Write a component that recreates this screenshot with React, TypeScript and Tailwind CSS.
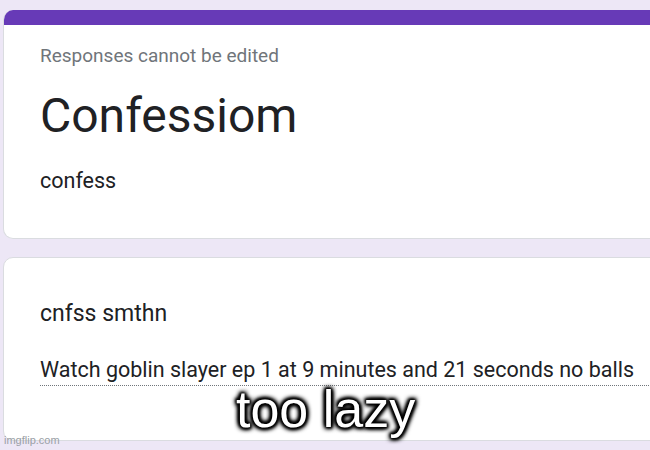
export default function App() {
  return (
    <div className="relative w-[650px] h-[450px] overflow-hidden bg-[#ede7f6]" style={{ fontFamily: "Roboto, 'Noto Sans', sans-serif" }}>
      <div className="pt-[10px] pl-[3px] flex flex-col gap-[18px]">
        <div className="w-[700px] rounded-[10px] overflow-hidden bg-white border border-[#dadce0] border-t-0">
          <div className="h-[15px] bg-[#673ab7]" />
          <div className="pl-[36px] pt-[19px] h-[213px]">
            <div className="text-[19px] leading-[24px] text-[#70757a]">Responses cannot be edited</div>
            <div className="mt-[18px] text-[48px] leading-[60px] text-[#202124]">Confessiom</div>
            <div className="mt-[21px] text-[21.5px] leading-[28px] text-[#202124]">confess</div>
          </div>
        </div>
        <div className="w-[700px] h-[184px] rounded-[10px] bg-white border border-[#dadce0] pl-[36px] pt-[42px]">
          <div className="text-[23px] leading-[28px] text-[#202124]">cnfss smthn</div>
          <div className="mt-[27px] w-[611px] text-[21.5px] leading-[30px] text-[#202124] border-b border-dotted border-[#70757a] whitespace-nowrap">
            Watch goblin slayer ep 1 at 9 minutes and 21 seconds no balls
          </div>
        </div>
      </div>
      <div
        className="absolute left-[236px] top-[379px] text-[52px] leading-[60px] text-white"
        style={{ fontFamily: "'Liberation Sans', Arial, sans-serif", textShadow: "0 0 3px #000, 0 0 3px #000, 1px 1px 3px #000, -1px -1px 3px #000, 2px 2px 4px #000, -2px 2px 4px #000, 2px -2px 4px #000, -2px -2px 4px #000" }}
      >
        too lazy
      </div>
      <div className="absolute left-[4px] top-[433px] text-[11px] leading-[14px] text-[#9aa0a6]" style={{ fontFamily: "'Liberation Sans', Arial, sans-serif" }}>
        imgflip.com
      </div>
    </div>
  );
}
